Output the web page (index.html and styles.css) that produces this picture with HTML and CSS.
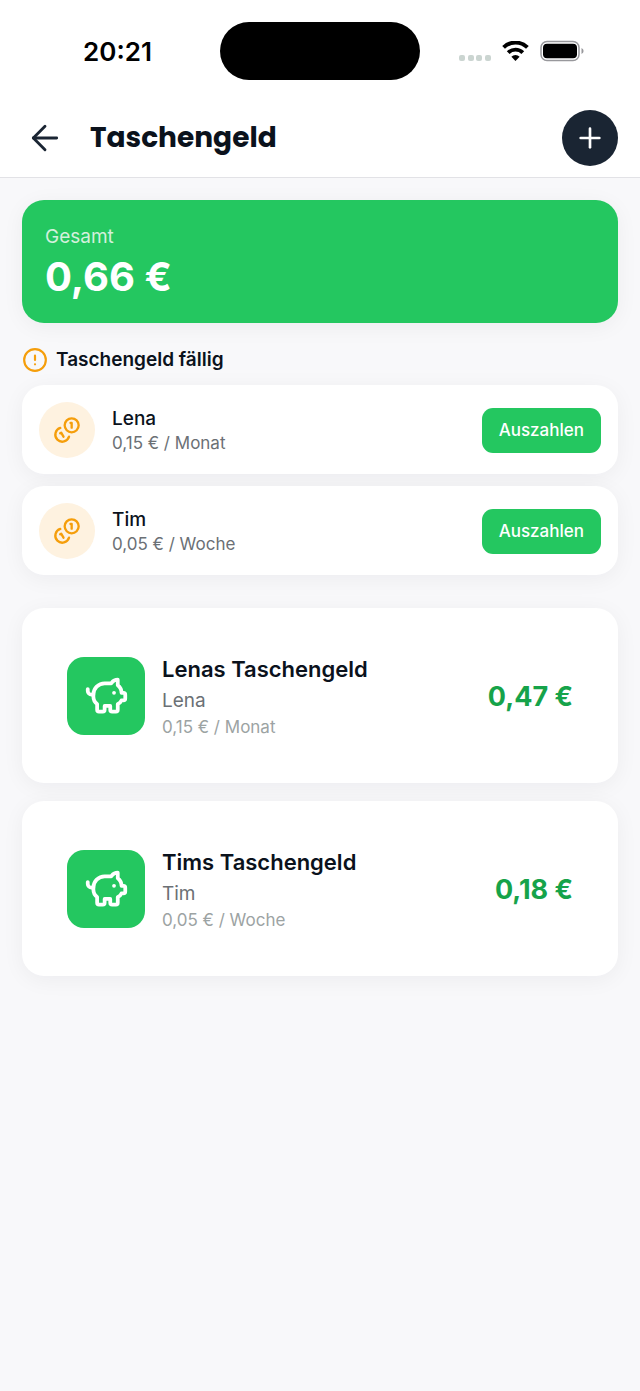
FILE: index.html
```html
<!DOCTYPE html>
<html lang="de">
<head>
<meta charset="utf-8">
<meta name="viewport" content="width=device-width, initial-scale=1">
<title>Taschengeld</title>
<link rel="stylesheet" href="styles.css">
</head>
<body>
<svg class="sprite" aria-hidden="true">
  <symbol id="coins" viewBox="0 0 24 24">
    <path d="M13.744 17.736a6 6 0 1 1-7.48-7.48"/>
    <path d="M15 6h1v4"/>
    <path d="m6.134 14.768.866-.5 2 3.464"/>
    <circle cx="16" cy="8" r="6"/>
  </symbol>
  <symbol id="piggy" viewBox="0 0 24 24">
    <path d="M11 17h3v2a1 1 0 0 0 1 1h2a1 1 0 0 0 1-1v-3a3.16 3.16 0 0 0 2-2h1a1 1 0 0 0 1-1v-2a1 1 0 0 0-1-1h-1a5 5 0 0 0-2-4V3a4 4 0 0 0-3.2 1.6l-.3.4H11a6 6 0 0 0-6 6v1a5 5 0 0 0 2 4v3a1 1 0 0 0 1 1h2a1 1 0 0 0 1-1z"/>
    <path d="M16 10h.01"/>
    <path d="M2 8v1a2 2 0 0 0 2 2h1"/>
  </symbol>
</svg>

<div class="statusbar">
  <time class="clock">20:21</time>
  <div class="island"></div>
  <div class="indicators">
    <span class="dots"><i></i><i></i><i></i><i></i></span>
    <svg class="wifi" viewBox="0 0 27 20" aria-hidden="true">
      <path d="M1.6 6.4a17 17 0 0 1 23.8 0" fill="none" stroke="#000" stroke-width="3.9"/>
      <path d="M6.2 11.6a10.4 10.4 0 0 1 14.6 0" fill="none" stroke="#000" stroke-width="3.9"/>
      <path d="M9.4 15.7a5.8 5.8 0 0 1 8.2 0L13.5 19.9z"/>
    </svg>
    <svg class="battery" viewBox="0 0 44 22" aria-hidden="true">
      <rect x="1" y="1.5" width="38" height="19" rx="6" fill="none" stroke="#98989c" stroke-width="1.5"/>
      <rect x="3" y="3.8" width="34" height="14.4" rx="4"/>
      <path d="M41.5 8v6a3.2 3.2 0 0 0 0-6z" fill="#98989c"/>
    </svg>
  </div>
</div>

<header class="header">
  <button class="back" type="button" aria-label="Zurück">
    <svg viewBox="0 0 24 24"><path d="m12 19-7-7 7-7"/><path d="M19 12H5"/></svg>
  </button>
  <h1>Taschengeld</h1>
  <button class="add" type="button" aria-label="Hinzufügen">
    <svg viewBox="0 0 24 24"><path d="M5 12h14"/><path d="M12 5v14"/></svg>
  </button>
</header>

<main class="content">
  <section class="total">
    <p class="total-label">Gesamt</p>
    <p class="total-amount">0,66 €</p>
  </section>

  <section class="due">
    <h2>
      <svg viewBox="0 0 24 24" aria-hidden="true"><circle cx="12" cy="12" r="10"/><path d="M12 8v4"/><path d="M12 16h.01"/></svg>
      Taschengeld fällig
    </h2>
    <ul class="due-list">
      <li class="due-card">
        <span class="coin"><svg aria-hidden="true"><use href="#coins"/></svg></span>
        <div class="info">
          <p class="due-name">Lena</p>
          <p class="due-rate">0,15 € / Monat</p>
        </div>
        <button class="pay" type="button">Auszahlen</button>
      </li>
      <li class="due-card">
        <span class="coin"><svg aria-hidden="true"><use href="#coins"/></svg></span>
        <div class="info">
          <p class="due-name">Tim</p>
          <p class="due-rate">0,05 € / Woche</p>
        </div>
        <button class="pay" type="button">Auszahlen</button>
      </li>
    </ul>
  </section>

  <ul class="accounts">
    <li class="account">
      <span class="pig"><svg aria-hidden="true"><use href="#piggy"/></svg></span>
      <div class="info">
        <h3>Lenas Taschengeld</h3>
        <p class="owner">Lena</p>
        <p class="rate">0,15 € / Monat</p>
      </div>
      <p class="balance">0,47 €</p>
    </li>
    <li class="account">
      <span class="pig"><svg aria-hidden="true"><use href="#piggy"/></svg></span>
      <div class="info">
        <h3>Tims Taschengeld</h3>
        <p class="owner">Tim</p>
        <p class="rate">0,05 € / Woche</p>
      </div>
      <p class="balance">0,18 €</p>
    </li>
  </ul>
</main>
</body>
</html>
```

FILE: styles.css
```css
:root {
  --green: #24c760;
  --ink: #0b121c;
  --navy: #1a2533;
  --orange: #f59e0b;
  --shadow: 0 4px 22px rgba(20, 20, 40, 0.05);
}

* {
  box-sizing: border-box;
}

body {
  margin: 0;
  min-height: 100vh;
  background: #f8f8fa;
  color: var(--ink);
  font-family: Inter, "Liberation Sans", sans-serif;
}

h1, h2, h3, p, ul {
  margin: 0;
  padding: 0;
}

ul {
  list-style: none;
}

button {
  border: 0;
  padding: 0;
  font-family: inherit;
}

svg {
  display: block;
}

.sprite {
  position: absolute;
  width: 0;
  height: 0;
}

.header svg, .due svg, .pig svg {
  fill: none;
  stroke: currentColor;
  stroke-width: 2;
  stroke-linecap: round;
  stroke-linejoin: round;
}

.statusbar {
  display: grid;
  grid-template-columns: 1fr 200px 1fr;
  align-items: center;
  padding: 22px 0 19px;
  background: #fff;
}

.clock {
  padding-left: 15px;
  text-align: center;
  font-size: 26px;
  font-weight: 600;
  color: #000;
}

.island {
  height: 58px;
  border-radius: 29px;
  background: #000;
}

.indicators {
  display: flex;
  align-items: center;
  gap: 11px;
  padding-left: 39px;
}

.dots {
  display: flex;
  justify-content: space-between;
  width: 32px;
  padding-top: 14px;
}

.dots i {
  width: 6px;
  height: 6px;
  border-radius: 2px;
  background: #cbd5d1;
}

.wifi {
  width: 27px;
  height: 20px;
}

.battery {
  width: 44px;
  height: 22px;
}

.header {
  display: flex;
  align-items: center;
  padding: 11px 22px;
  border-bottom: 1px solid #e2e2e6;
  background: #fff;
}

.back {
  display: grid;
  place-items: center;
  width: 46px;
  height: 56px;
  background: none;
  color: var(--navy);
}

.back svg {
  width: 40px;
  height: 40px;
  stroke-width: 1.7;
}

.header h1 {
  flex: 1;
  padding-left: 22px;
  font-family: Poppins, Inter, sans-serif;
  font-size: 28px;
  font-weight: 700;
  line-height: 40px;
}

.add {
  display: grid;
  place-items: center;
  width: 56px;
  height: 56px;
  border-radius: 50%;
  background: var(--navy);
  color: #fff;
}

.add svg {
  width: 32px;
  height: 32px;
}

.content {
  padding: 22px;
}

.total {
  padding: 22px 23px;
  border-radius: 22px;
  background: var(--green);
  box-shadow: var(--shadow);
  color: #fff;
}

.total-label {
  color: #d3f0dc;
  font-size: 19px;
  line-height: 30px;
}

.total-amount {
  font-size: 40px;
  font-weight: 700;
  line-height: 49px;
}

.due h2 {
  display: flex;
  align-items: center;
  gap: 8px;
  padding: 23px 0 11px;
  font-size: 19px;
  font-weight: 600;
  line-height: 28px;
}

.due h2 svg {
  width: 26px;
  height: 26px;
  color: var(--orange);
}

.due-list {
  display: grid;
  gap: 12px;
}

.due-card {
  display: flex;
  align-items: center;
  gap: 17px;
  padding: 17px 17px 16px;
  border-radius: 22px;
  background: #fff;
  box-shadow: var(--shadow);
}

.coin {
  display: grid;
  place-items: center;
  width: 56px;
  height: 56px;
  border-radius: 50%;
  background: #fef2e0;
  color: var(--orange);
}

.coin svg {
  width: 28px;
  height: 28px;
}

.info {
  flex: 1;
}

.due-name {
  font-size: 19px;
  font-weight: 500;
  line-height: 27px;
}

.due-rate {
  color: #6b7075;
  font-size: 17px;
  line-height: 23px;
}

.pay {
  padding: 11px 17px;
  border-radius: 11px;
  background: var(--green);
  color: #fff;
  font-size: 17px;
  font-weight: 500;
  line-height: 23px;
}

.accounts {
  display: grid;
  gap: 18px;
  padding-top: 33px;
}

.account {
  display: flex;
  align-items: center;
  gap: 17px;
  padding: 44px 45px 43px;
  border-radius: 22px;
  background: #fff;
  box-shadow: var(--shadow);
}

.pig {
  display: grid;
  place-items: center;
  width: 78px;
  height: 78px;
  border-radius: 17px;
  background: var(--green);
  color: #fff;
}

.pig svg {
  width: 45px;
  height: 45px;
}

.account h3 {
  font-size: 22px;
  font-weight: 600;
  line-height: 35px;
}

.owner {
  color: #6b7075;
  font-size: 19px;
  line-height: 28px;
}

.rate {
  color: #9ca3a3;
  font-size: 17px;
  line-height: 25px;
}

.balance {
  color: #16a34a;
  font-size: 27px;
  font-weight: 700;
}
```
